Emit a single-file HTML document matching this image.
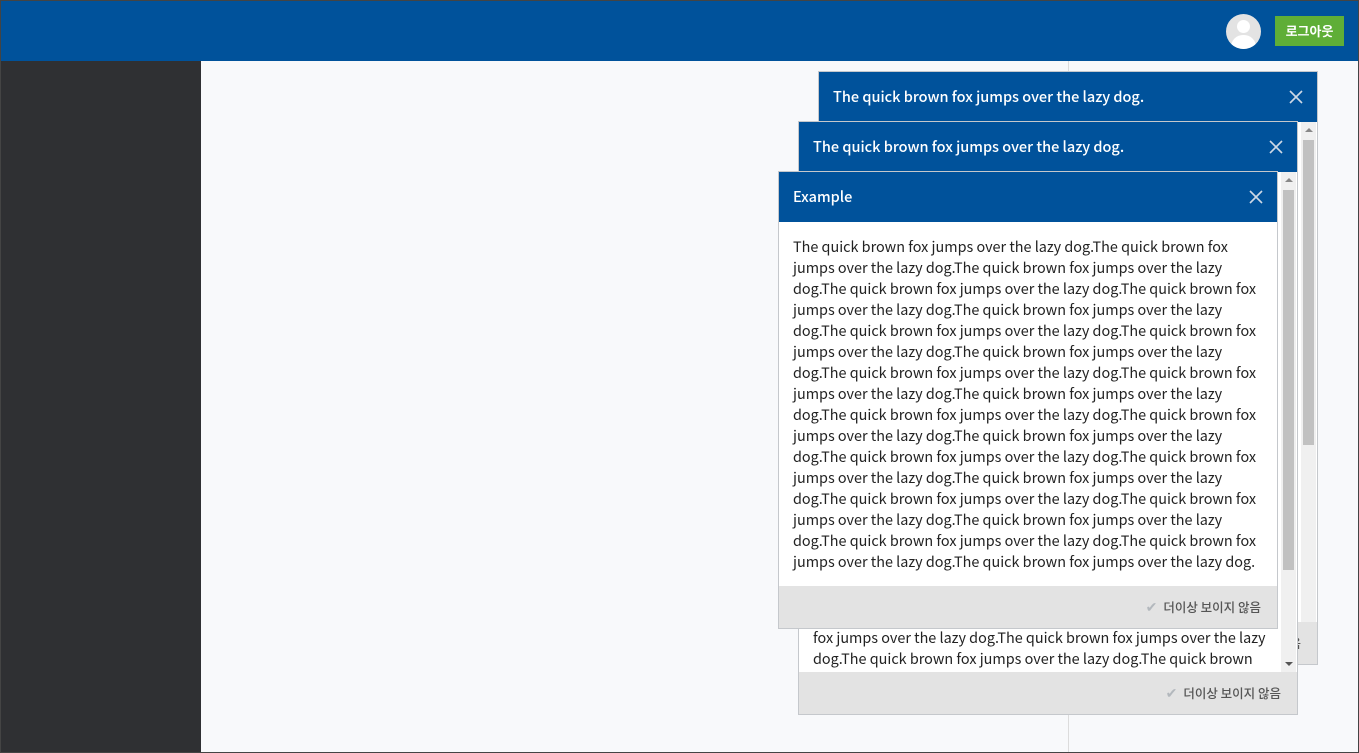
<!DOCTYPE html>
<html><head><meta charset="utf-8"><style>
*{margin:0;padding:0;box-sizing:border-box}
body{width:1359px;height:753px;overflow:hidden;position:relative;background:#f8f9fb;font-family:"Noto Sans CJK KR","Liberation Sans",sans-serif;}
.frame{position:absolute;left:0;top:0;width:1359px;height:753px;border:1px solid #444;z-index:50;pointer-events:none}
.hdr{position:absolute;left:0;top:0;width:1359px;height:61px;background:#00529b}
.side{position:absolute;left:0;top:61px;width:201px;height:692px;background:#2f3033}
.vl{position:absolute;left:1068px;top:61px;width:1px;height:692px;background:#dcdcdc}
.av{position:absolute;left:1226px;top:14px;width:35px;height:35px;border-radius:50%;background:#e3e3e3;overflow:hidden}
.av:before{content:"";position:absolute;left:11px;top:6px;width:13px;height:13px;border-radius:50%;background:#fff}
.av:after{content:"";position:absolute;left:5px;top:21px;width:25px;height:20px;border-radius:12px 12px 0 0;background:#fff}
.btn{position:absolute;left:1275px;top:16px;width:69px;height:30px;background:#5fae37;color:#fff;font-size:13px;font-weight:bold;text-align:center;line-height:30px}
.pop{position:absolute;width:500px;background:#fff;border:1px solid #c5c8cc}
.ph{height:50px;background:#00529b;color:#fff;font-size:14.5px;font-weight:500;line-height:49px;padding-left:14px;position:relative}
.x{position:absolute right;position:absolute;right:14px;top:18px;width:14px;height:14px}
.pb{position:absolute;left:0;right:0;overflow:hidden;font-size:14.4px;line-height:21px;color:#222;padding:0 14px}
.pb div{white-space:nowrap}
.pf{position:absolute;left:0;right:0;bottom:0;height:42px;background:#e3e3e3;font-size:12.5px;font-weight:500;color:#555;text-align:right;padding-right:16px;line-height:42px}
.pf span{color:#b3b8bd;margin-right:6px;font-size:14px}
.sb{position:absolute;width:15px;background:#f0f0f0}
.sb i{position:absolute;left:2px;width:11px;background:#c1c1c1}
.sb b{position:absolute;left:4px;width:0;height:0;border-left:4px solid transparent;border-right:4px solid transparent}
</style></head><body>
<div class="hdr"></div>
<div class="av"></div>
<div class="btn">로그아웃</div>
<div class="side"></div>
<div class="vl"></div>

<div class="pop" style="left:818px;top:71px;height:594px">
 <div class="ph">The quick brown fox jumps over the lazy dog.<svg class="x" viewBox="0 0 14 14"><path d="M1 1L13 13M13 1L1 13" stroke="#cfd9e6" stroke-width="1.6"/></svg></div>
 <div class="sb" style="left:482px;top:50px;height:500px"><b style="top:6px;border-bottom:4px solid #888"></b><i style="top:18px;height:305px"></i></div>
 <div class="pf"><span>✔</span>더이상 보이지 않음</div>
</div>

<div class="pop" style="left:798px;top:121px;height:594px">
 <div class="ph">The quick brown fox jumps over the lazy dog.<svg class="x" viewBox="0 0 14 14"><path d="M1 1L13 13M13 1L1 13" stroke="#cfd9e6" stroke-width="1.6"/></svg></div>
 <div class="pb" style="top:456px;height:94px;padding-top:49px">
  <div>fox jumps over the lazy dog.The quick brown fox jumps over the lazy</div>
  <div>dog.The quick brown fox jumps over the lazy dog.The quick brown</div>
 </div>
 <div class="sb" style="left:482px;top:50px;height:500px"><b style="top:6px;border-bottom:4px solid #888"></b><i style="top:18px;height:380px"></i><b style="bottom:6px;border-top:4px solid #555"></b></div>
 <div class="pf"><span>✔</span>더이상 보이지 않음</div>
</div>

<div class="pop" style="left:778px;top:171px;height:458px">
 <div class="ph">Example<svg class="x" viewBox="0 0 14 14"><path d="M1 1L13 13M13 1L1 13" stroke="#cfd9e6" stroke-width="1.6"/></svg></div>
 <div class="pb" style="top:64px;height:350px">
<div>The quick brown fox jumps over the lazy dog.The quick brown fox</div>
<div>jumps over the lazy dog.The quick brown fox jumps over the lazy</div>
<div>dog.The quick brown fox jumps over the lazy dog.The quick brown fox</div>
<div>jumps over the lazy dog.The quick brown fox jumps over the lazy</div>
<div>dog.The quick brown fox jumps over the lazy dog.The quick brown fox</div>
<div>jumps over the lazy dog.The quick brown fox jumps over the lazy</div>
<div>dog.The quick brown fox jumps over the lazy dog.The quick brown fox</div>
<div>jumps over the lazy dog.The quick brown fox jumps over the lazy</div>
<div>dog.The quick brown fox jumps over the lazy dog.The quick brown fox</div>
<div>jumps over the lazy dog.The quick brown fox jumps over the lazy</div>
<div>dog.The quick brown fox jumps over the lazy dog.The quick brown fox</div>
<div>jumps over the lazy dog.The quick brown fox jumps over the lazy</div>
<div>dog.The quick brown fox jumps over the lazy dog.The quick brown fox</div>
<div>jumps over the lazy dog.The quick brown fox jumps over the lazy</div>
<div>dog.The quick brown fox jumps over the lazy dog.The quick brown fox</div>
<div>jumps over the lazy dog.The quick brown fox jumps over the lazy dog.</div>
 </div>
 <div class="pf"><span>✔</span>더이상 보이지 않음</div>
</div>
<div class="frame"></div>
</body></html>
